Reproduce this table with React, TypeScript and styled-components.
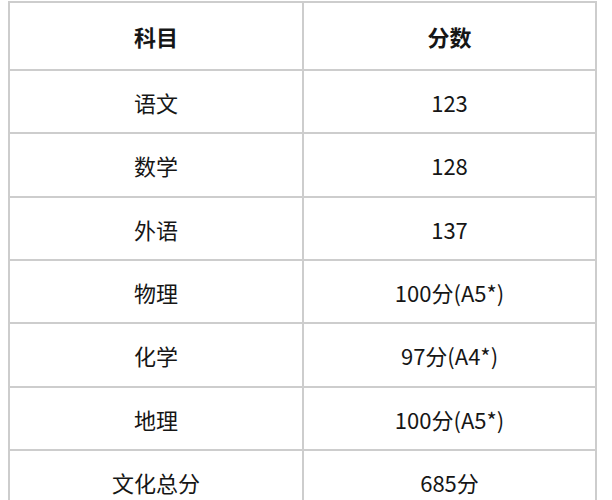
import React from "react";
import styled, { createGlobalStyle } from "styled-components";

const GlobalStyle = createGlobalStyle`
  html, body {
    margin: 0;
    padding: 0;
    background: #ffffff;
  }
  body {
    font-family: "Noto Sans CJK SC", "Noto Sans", sans-serif;
    color: #161616;
  }
`;

const Page = styled.div`
  padding: 1px 0 0 8px;
`;

const Grid = styled.div`
  display: grid;
  grid-template-columns: 294px 293px;
  grid-template-rows: 68px;
  grid-auto-rows: 63.33px;
  width: 589px;
  box-sizing: border-box;
  border-top: 2px solid #cdcdcd;
  border-left: 2px solid #cdcdcd;
`;

const Cell = styled.div<{ $head?: boolean }>`
  box-sizing: border-box;
  display: flex;
  align-items: center;
  justify-content: center;
  border-right: 2px solid #cdcdcd;
  border-bottom: 2px solid #cdcdcd;
  font-size: 22px;
  font-weight: ${(p) => (p.$head ? 700 : 400)};
  line-height: 1;
  padding-top: ${(p) => (p.$head ? "0" : "1px")};
`;

const rows: [string, string][] = [
  ["语文", "123"],
  ["数学", "128"],
  ["外语", "137"],
  ["物理", "100分(A5*)"],
  ["化学", "97分(A4*)"],
  ["地理", "100分(A5*)"],
  ["文化总分", "685分"],
];

export default function App() {
  return (
    <>
      <GlobalStyle />
      <Page>
        <Grid>
          <Cell $head>科目</Cell>
          <Cell $head>分数</Cell>
          {rows.map(([s, v]) => (
            <React.Fragment key={s}>
              <Cell>{s}</Cell>
              <Cell>{v}</Cell>
            </React.Fragment>
          ))}
        </Grid>
      </Page>
    </>
  );
}
